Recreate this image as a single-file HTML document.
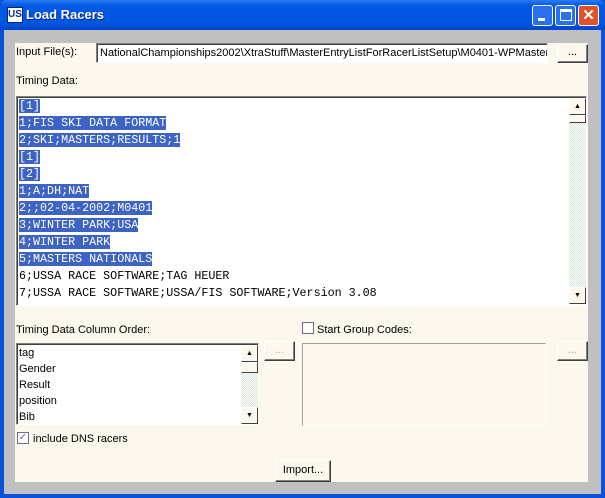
<!DOCTYPE html>
<html><head><style>
*{margin:0;padding:0;box-sizing:border-box}
body{width:605px;height:498px;position:relative;background:#0a50d8;font-family:"Liberation Sans",sans-serif;font-size:11px;overflow:hidden}
.abs{position:absolute}
#title{left:0;top:0;width:605px;height:30px;background:linear-gradient(#2a7af0,#0058e6 20%,#0055e0 80%,#0043c8);border-radius:7px 7px 0 0}
#grey{left:4px;top:30px;width:597px;height:464px;background:#c0c0c0}
#content{left:15px;top:43px;width:573px;height:439px;background:#fcf8ee}
.lbl{position:absolute;color:#000;font-size:11px}
.sunk{position:absolute;background:#fff;border:1px solid;border-color:#808080 #fff #fff #808080;box-shadow:inset 1px 1px 0 #404040}
.btn{position:absolute;background:#fcf8ee;border:1px solid;border-color:#fff #404040 #404040 #fff;box-shadow:inset -1px -1px 0 #808080;text-align:center;font-size:11px;color:#000}
.tb{position:absolute;width:21px;height:21px;top:5px;border:1px solid #fff;border-radius:3px}
.mono{font-family:"Liberation Mono",monospace;font-size:11.7px;line-height:17px;white-space:pre;color:#000}
.sel{background:#3d64c4;color:#fff}
.sb{position:absolute;background:repeating-conic-gradient(#d8e6d8 0 25%,#fff 0 50%) 0 0/2px 2px}
.arr{position:absolute;left:0;width:17px;height:17px;background:#fcf8ee;border:1px solid;border-color:#fff #404040 #404040 #fff;font-size:7px;text-align:center;line-height:15px;color:#000}
.cb{position:absolute;width:12px;height:12px;border:1px solid #7a6a8a;background:#fff}
</style></head><body>
<div id="title" class="abs"></div>
<div class="abs" style="left:7px;top:7px;width:16px;height:16px;background:#fff;border:1px solid #002080;color:#0030b0;font-size:10px;font-weight:bold;line-height:14px;text-align:center">US</div>
<div class="abs" style="left:26px;top:7px;color:#fff;font-weight:bold;font-size:13px;text-shadow:1px 1px #0a2a80">Load Racers</div>
<div class="tb" style="left:532px;background:#2a70ee"><div class="abs" style="left:5px;top:12px;width:7px;height:3px;background:#fff"></div></div>
<div class="tb" style="left:555px;background:#2a70ee"><div class="abs" style="left:4px;top:3px;width:12px;height:12px;border:1px solid #fff;border-top:3px solid #fff"></div></div>
<div class="tb" style="left:578px;background:#e0522a;color:#fff;font-weight:bold;font-size:15px;text-align:center;line-height:19px">✕</div>
<div id="grey" class="abs"></div>
<div id="content" class="abs"></div>

<div class="lbl" style="left:16px;top:46px">Input File(s):</div>
<div class="sunk" style="left:96px;top:43px;width:452px;height:20px;overflow:hidden;white-space:nowrap;padding:3px 0 0 3px;font-size:11px">NationalChampionships2002\XtraStuff\MasterEntryListForRacerListSetup\M0401-WPMasterEntr</div>
<div class="btn" style="left:557px;top:44px;width:31px;height:19px;line-height:15px">...</div>

<div class="lbl" style="left:16px;top:75px">Timing Data:</div>
<div class="sunk" style="left:16px;top:96px;width:571px;height:210px;overflow:hidden">
<div class="mono" style="position:absolute;left:2px;top:1px"><span class="sel">[1]</span>
<span class="sel">1;FIS SKI DATA FORMAT</span>
<span class="sel">2;SKI;MASTERS;RESULTS;1</span>
<span class="sel">[1]</span>
<span class="sel">[2]</span>
<span class="sel">1;A;DH;NAT</span>
<span class="sel">2;;02-04-2002;M0401</span>
<span class="sel">3;WINTER PARK;USA</span>
<span class="sel">4;WINTER PARK</span>
<span class="sel">5;MASTERS NATIONALS</span>
6;USSA RACE SOFTWARE;TAG HEUER
7;USSA RACE SOFTWARE;USSA/FIS SOFTWARE;Version 3.08</div>
<div class="sb" style="left:552px;top:1px;width:17px;height:206px;background-color:#fff">
<div class="arr" style="top:0">▲</div>
<div class="arr" style="top:17px;height:8px"></div>
<div class="arr" style="top:189px">▼</div></div>
</div>

<div class="lbl" style="left:16px;top:324px">Timing Data Column Order:</div>
<div class="cb" style="left:302px;top:322px"></div>
<div class="lbl" style="left:317px;top:324px">Start Group Codes:</div>
<div class="sunk" style="left:16px;top:343px;width:243px;height:82px;overflow:hidden">
<div style="position:absolute;left:2px;top:1px;line-height:16px;font-size:11px">tag<br>Gender<br>Result<br>position<br>Bib</div>
<div class="sb" style="left:224px;top:1px;width:17px;height:79px">
<div class="arr" style="top:0">▲</div>
<div class="arr" style="top:17px;height:11px"></div>
<div class="arr" style="top:62px">▼</div></div>
</div>
<div class="btn" style="left:264px;top:341px;width:31px;height:20px;line-height:16px;color:#aaa">...</div>
<div class="abs" style="left:302px;top:343px;width:244px;height:83px;border:1px solid;border-color:#a0a0a0 #fff #fff #a0a0a0"></div>
<div class="btn" style="left:557px;top:341px;width:31px;height:20px;line-height:16px;color:#aaa">...</div>

<div class="cb" style="left:17px;top:432px;color:#7a6a8a;font-size:10px;line-height:10px;text-align:center">✓</div>
<div class="lbl" style="left:33px;top:433px">include DNS racers</div>
<div class="btn" style="left:275px;top:460px;width:56px;height:22px;line-height:19px">Import...</div>
</body></html>
